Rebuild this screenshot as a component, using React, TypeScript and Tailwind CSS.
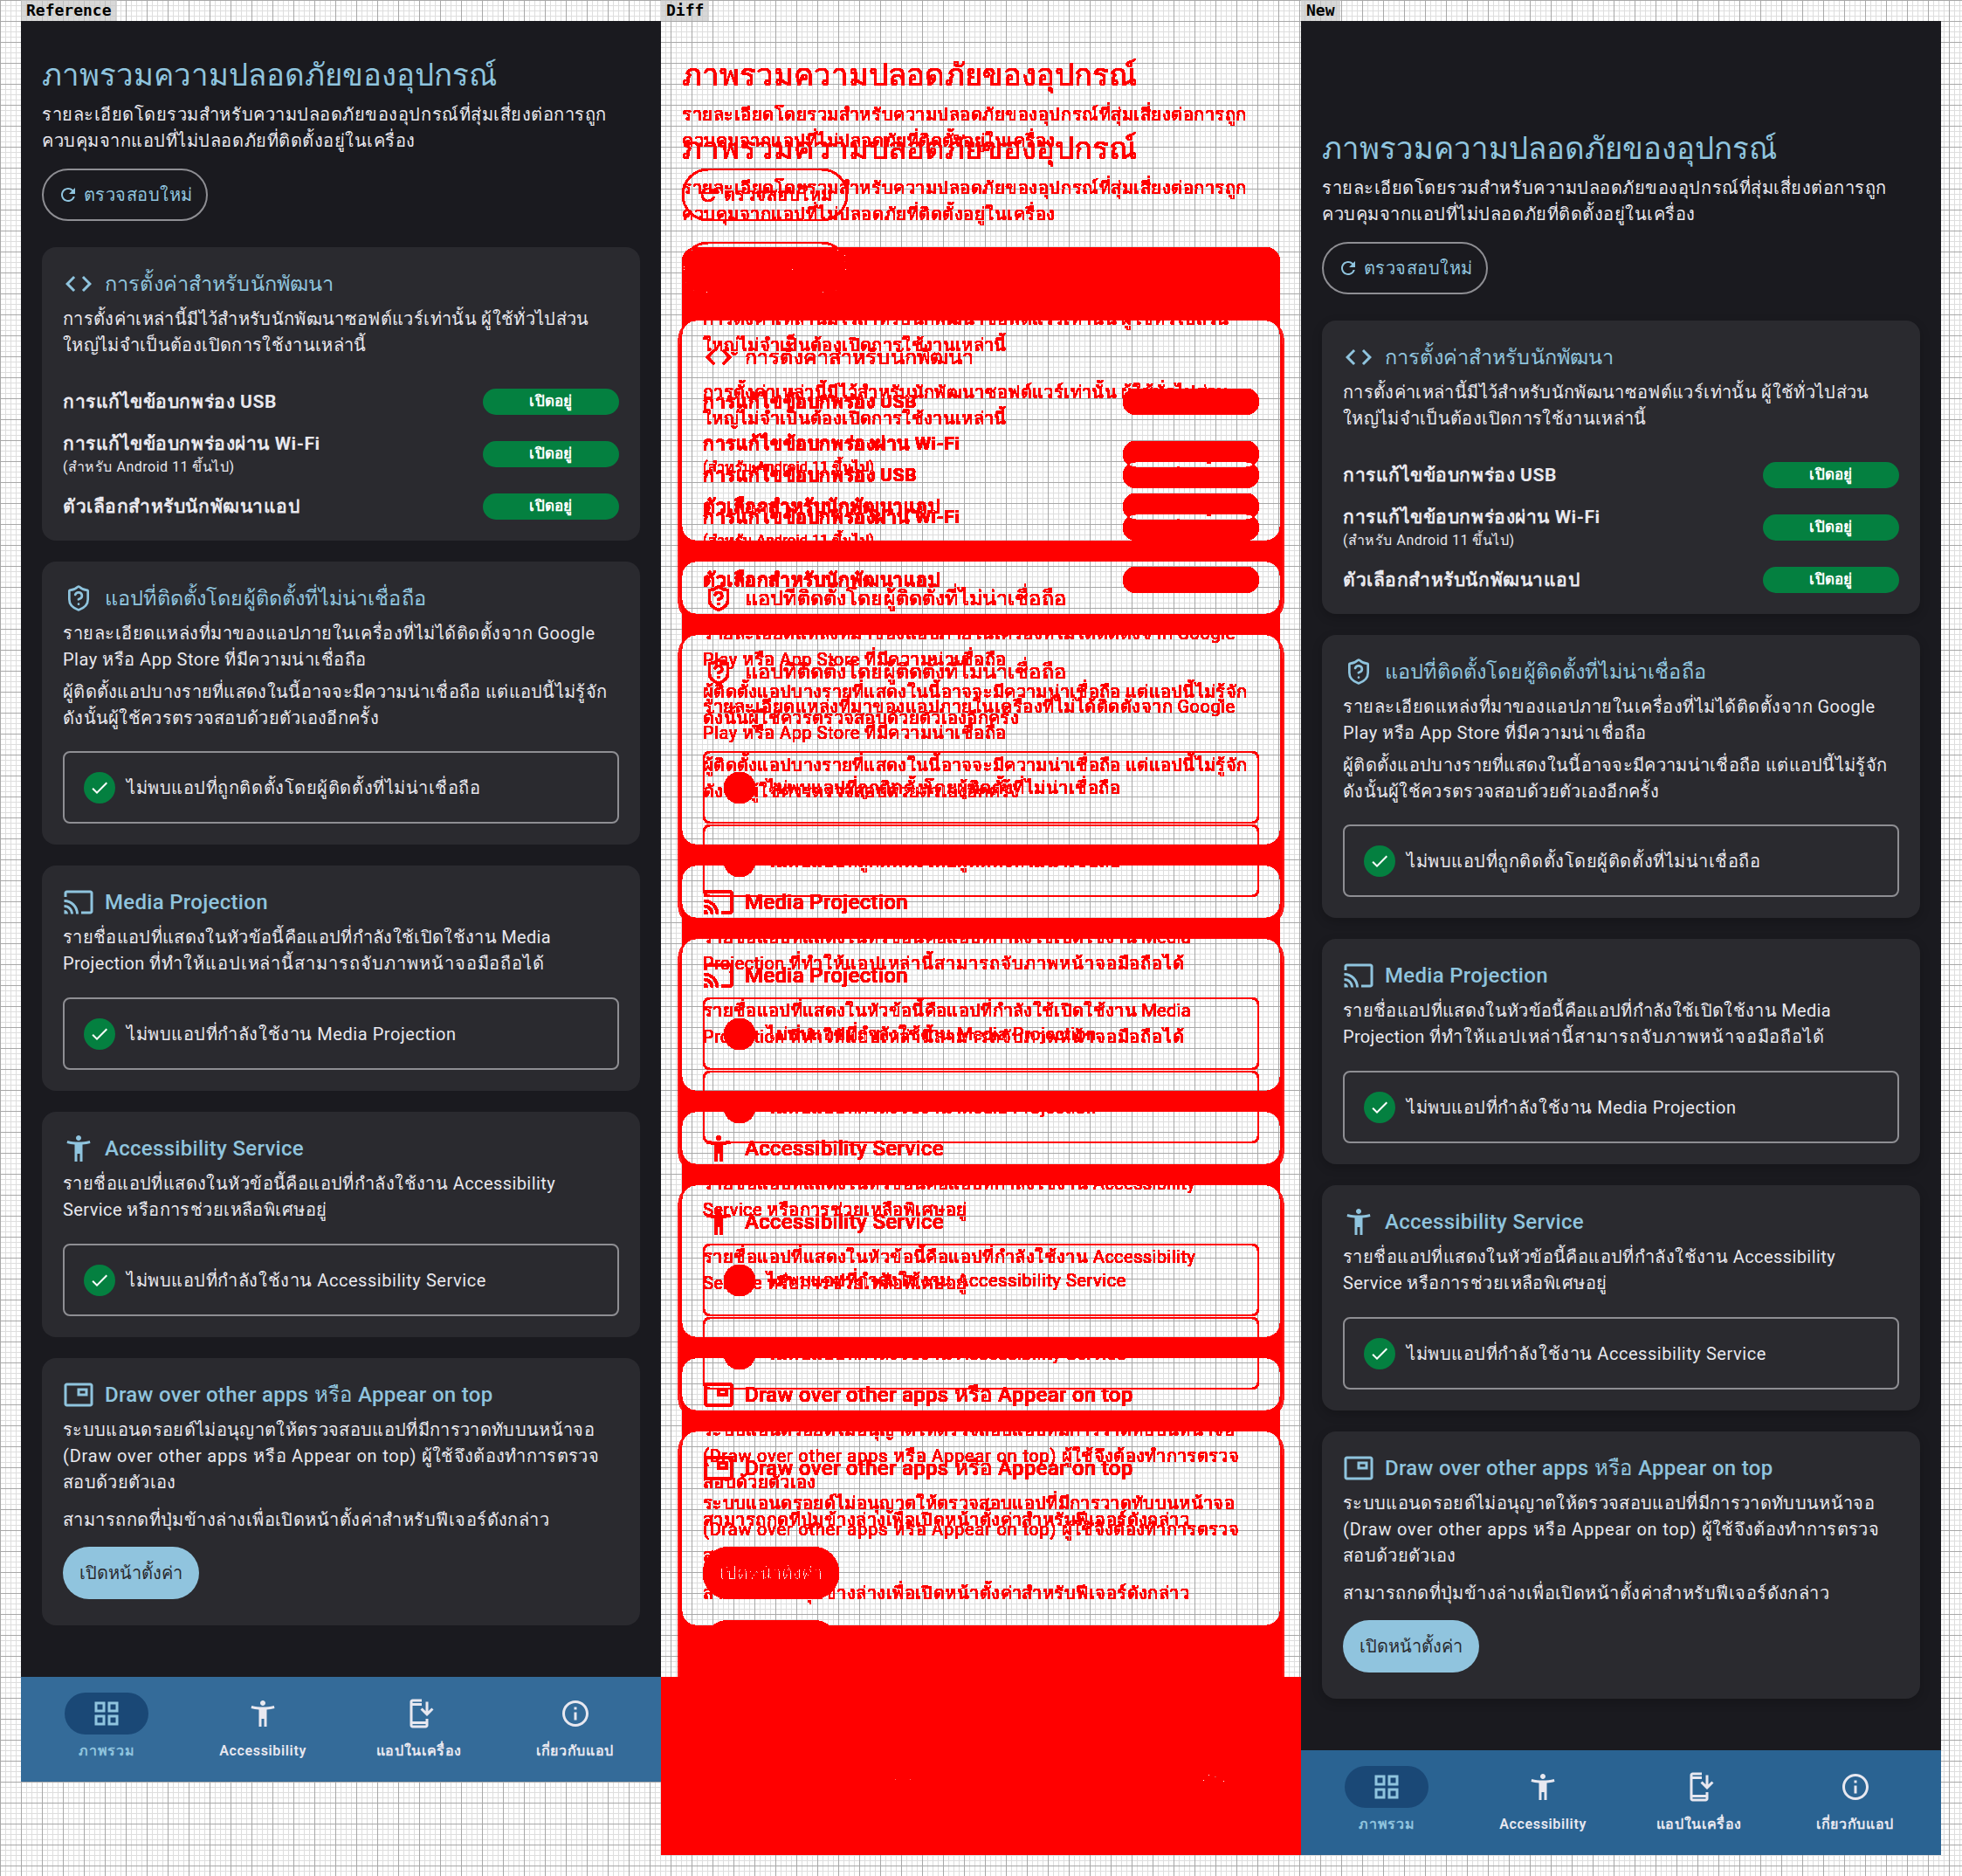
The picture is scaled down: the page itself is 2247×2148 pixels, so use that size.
import type { ReactNode } from 'react'
import { MdAccessibilityNew, MdCheck, MdCode, MdOutlineCast, MdOutlineGridView, MdOutlineInfo, MdOutlineInstallMobile, MdOutlinePictureInPicture, MdRefresh } from 'react-icons/md'
import { ShieldQuestion } from 'lucide-react'

const bodyText = 'text-[20px] leading-[30px] text-[#e8e8ee]'

function SectionCard({ icon, title, thai, raised, className, children }: {
  icon: ReactNode
  title: string
  thai?: boolean
  raised: boolean
  className?: string
  children: ReactNode
}) {
  return (
    <section className={`rounded-2xl bg-[#2a2a2f] px-6 pt-6 ${raised ? 'shadow-[0_4px_12px_rgba(0,0,0,0.2)]' : ''} ${className ?? 'pb-6'}`}>
      <div className="flex h-9 items-center gap-3 text-[#8fc4de]">
        <span className="flex w-9 justify-center">{icon}</span>
        <h2 className={`leading-9 font-medium ${thai ? 'text-[23.5px] tracking-[0.15px]' : 'text-[24px] tracking-[0.3px]'}`}>{title}</h2>
      </div>
      {children}
    </section>
  )
}

function EmptyNotice({ text }: { text: string }) {
  return (
    <div className={`flex h-[83px] items-center gap-[13px] rounded-lg border-2 border-[#8e8e93] px-[22px] tracking-[0.55px] ${bodyText}`}>
      <span className="flex h-9 w-9 items-center justify-center rounded-full bg-[#048040] text-white">
        <MdCheck className="h-6 w-6" />
      </span>
      {text}
    </div>
  )
}

function DevRow({ title, sub }: { title: string; sub?: string }) {
  return (
    <div className="flex items-center justify-between">
      <div>
        <p className="text-[21px] leading-[30px] font-bold tracking-[0.55px] text-[#e8e8ee]">{title}</p>
        {sub && <p className="text-[16px] leading-6 tracking-[0.5px] text-[#e8e8ee]">{sub}</p>}
      </div>
      <span className="flex h-[30px] w-[156px] items-center justify-center rounded-full bg-[#048040] text-[17px] font-bold tracking-[0.3px] text-white">เปิดอยู่</span>
    </div>
  )
}

function NavItem({ icon, label, active }: { icon: ReactNode; label: string; active?: boolean }) {
  return (
    <div className={`flex flex-col items-center ${active ? 'text-[#8fc4de]' : 'text-[#e8e8f0]'}`}>
      <span className={`flex h-12 w-24 items-center justify-center rounded-full ${active ? 'bg-[#1a4876]' : ''}`}>{icon}</span>
      <span className="mt-[7px] text-[16px] leading-6 font-semibold tracking-[0.65px]">{label}</span>
    </div>
  )
}

function OverviewScreen({ variant }: { variant: 'reference' | 'new' }) {
  const isNew = variant === 'new'
  return (
    <div className={`flex w-[733px] flex-col bg-[#1a1a1f] font-['Roboto','Noto_Sans',sans-serif] ${isNew ? 'h-[2100px]' : 'h-[2016px]'}`}>
      <main className={`flex flex-1 flex-col px-6 ${isNew ? 'pt-[123px]' : 'pt-[39px]'}`}>
        <h1 className="text-[34.8px] leading-[46px] text-[#8fc4de]">ภาพรวมความปลอดภัยของอุปกรณ์</h1>
        <p className={`mt-[7px] tracking-[0.53px] ${bodyText}`}>
          รายละเอียดโดยรวมสำหรับความปลอดภัยของอุปกรณ์ที่สุ่มเสี่ยงต่อการถูกควบคุมจากแอปที่ไม่ปลอดภัยที่ติดตั้งอยู่ในเครื่อง
        </p>
        <button className="mt-[17px] flex h-[60px] w-[190px] items-center justify-center gap-1.5 rounded-full border-2 border-[#8e8e93] text-[20px] tracking-[0.5px] text-[#8fc4de]">
          <MdRefresh className="h-6 w-6" />
          ตรวจสอบใหม่
        </button>

        <div className="mt-[30px] flex flex-col gap-6">
          <SectionCard raised={isNew} thai icon={<MdCode className="h-9 w-9" />} title="การตั้งค่าสำหรับนักพัฒนา">
            <p className={`mt-[7px] tracking-[0.35px] ${bodyText}`}>
              การตั้งค่าเหล่านี้มีไว้สำหรับนักพัฒนาซอฟต์แวร์เท่านั้น ผู้ใช้ทั่วไปส่วนใหญ่ไม่จำเป็นต้องเปิดการใช้งานเหล่านี้
            </p>
            <div className="mt-[35px] flex flex-col gap-[18px]">
              <DevRow title="การแก้ไขข้อบกพร่อง USB" />
              <DevRow title="การแก้ไขข้อบกพร่องผ่าน Wi-Fi" sub="(สำหรับ Android 11 ขึ้นไป)" />
              <DevRow title="ตัวเลือกสำหรับนักพัฒนาแอป" />
            </div>
          </SectionCard>

          <SectionCard raised={isNew} thai icon={<ShieldQuestion className="h-8 w-8" />} title="แอปที่ติดตั้งโดยผู้ติดตั้งที่ไม่น่าเชื่อถือ">
            <p className={`mt-[7px] tracking-[0.5px] ${bodyText}`}>
              รายละเอียดแหล่งที่มาของแอปภายในเครื่องที่ไม่ได้ติดตั้งจาก Google Play หรือ App Store ที่มีความน่าเชื่อถือ
            </p>
            <p className={`mt-[7px] tracking-[0.3px] ${bodyText}`}>
              ผู้ติดตั้งแอปบางรายที่แสดงในนี้อาจจะมีความน่าเชื่อถือ แต่แอปนี้ไม่รู้จัก ดังนั้นผู้ใช้ควรตรวจสอบด้วยตัวเองอีกครั้ง
            </p>
            <div className="mt-[23px]"><EmptyNotice text="ไม่พบแอปที่ถูกติดตั้งโดยผู้ติดตั้งที่ไม่น่าเชื่อถือ" /></div>
          </SectionCard>

          <SectionCard raised={isNew} icon={<MdOutlineCast className="h-9 w-9" />} title="Media Projection">
            <p className={`mt-[7px] tracking-[0.33px] ${bodyText}`}>
              รายชื่อแอปที่แสดงในหัวข้อนี้คือแอปที่กำลังใช้เปิดใช้งาน Media Projection <span className="tracking-[0.95px]">ที่ทำให้แอปเหล่านี้สามารถจับภาพหน้าจอมือถือได้</span>
            </p>
            <div className="mt-6"><EmptyNotice text="ไม่พบแอปที่กำลังใช้งาน Media Projection" /></div>
          </SectionCard>

          <SectionCard raised={isNew} icon={<MdAccessibilityNew className="h-9 w-9" />} title="Accessibility Service">
            <p className={`mt-[7px] tracking-[0.42px] ${bodyText}`}>
              รายชื่อแอปที่แสดงในหัวข้อนี้คือแอปที่กำลังใช้งาน Accessibility Service หรือการช่วยเหลือพิเศษอยู่
            </p>
            <div className="mt-6"><EmptyNotice text="ไม่พบแอปที่กำลังใช้งาน Accessibility Service" /></div>
          </SectionCard>

          <SectionCard raised={isNew} className="pb-[30px]" icon={<MdOutlinePictureInPicture className="h-9 w-9" />} title="Draw over other apps หรือ Appear on top">
            <p className={`mt-[7px] tracking-[0.33px] ${bodyText}`}>
              ระบบแอนดรอยด์ไม่อนุญาตให้ตรวจสอบแอปที่มีการวาดทับบนหน้าจอ <span className="tracking-[0.8px]">(Draw over other apps หรือ Appear on top)</span> ผู้ใช้จึงต้องทำการตรวจสอบด้วยตัวเอง
            </p>
            <p className={`mt-[13px] tracking-[0.45px] ${bodyText}`}>
              สามารถกดที่ปุ่มข้างล่างเพื่อเปิดหน้าตั้งค่าสำหรับฟีเจอร์ดังกล่าว
            </p>
            <button className="mt-4 h-[60px] w-[156px] rounded-full bg-[#90c4de] text-[20px] text-[#2a2a2f]">เปิดหน้าตั้งค่า</button>
          </SectionCard>
        </div>
      </main>
      <nav className={`grid h-[120px] grid-cols-4 px-[9px] pt-[18px] ${isNew ? 'bg-[#2a6392]' : 'bg-[#346b99]'}`}>
        <NavItem active icon={<MdOutlineGridView className="h-9 w-9" />} label="ภาพรวม" />
        <NavItem icon={<MdAccessibilityNew className="h-9 w-9" />} label="Accessibility" />
        <NavItem icon={<MdOutlineInstallMobile className="h-9 w-9" />} label="แอปในเครื่อง" />
        <NavItem icon={<MdOutlineInfo className="h-9 w-9" />} label="เกี่ยวกับแอป" />
      </nav>
    </div>
  )
}

function PanelLabel({ children }: { children: string }) {
  return (
    <div className="h-6 w-fit bg-[#c8c8c8]/70 px-1.5 font-['DejaVu_Sans_Mono',monospace] text-[18px] leading-6 font-bold text-black">
      {children}
    </div>
  )
}

// turns every pixel that is not black into solid red, black into transparent
function DiffFilter() {
  return (
    <svg className="absolute h-0 w-0">
      <filter id="diff-threshold" colorInterpolationFilters="sRGB" x="0" y="0" width="100%" height="100%">
        <feColorMatrix type="matrix" values="0 0 0 0 1  0 0 0 0 0  0 0 0 0 0  80 80 80 0 -1" />
      </filter>
    </svg>
  )
}

export default function App() {
  return (
    <div className="flex h-[2148px] w-[2247px] bg-white bg-[linear-gradient(#a8a8a8_1px,transparent_1px),linear-gradient(90deg,#a8a8a8_1px,transparent_1px),linear-gradient(#dedede_1px,transparent_1px),linear-gradient(90deg,#dedede_1px,transparent_1px)] bg-[size:24px_24px,24px_24px,6px_6px,6px_6px] pl-6">
      <DiffFilter />
      <div className="w-[733px]">
        <PanelLabel>Reference</PanelLabel>
        <OverviewScreen variant="reference" />
      </div>
      <div className="w-[733px]">
        <PanelLabel>Diff</PanelLabel>
        <div className="relative h-[2100px] w-[733px] [filter:url(#diff-threshold)]">
          <OverviewScreen variant="new" />
          <div className="absolute top-0 left-0 mix-blend-difference">
            <OverviewScreen variant="reference" />
          </div>
        </div>
      </div>
      <div className="w-[733px]">
        <PanelLabel>New</PanelLabel>
        <OverviewScreen variant="new" />
      </div>
    </div>
  )
}
